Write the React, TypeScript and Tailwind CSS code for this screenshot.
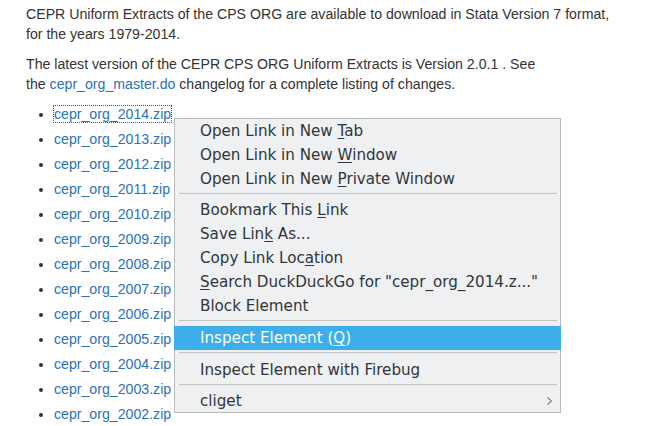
import React from 'react';

const years = ['2014', '2013', '2012', '2011', '2010', '2009', '2008', '2007', '2006', '2005', '2004', '2003', '2002'];

function Item({ children, active = false, arrow = false, h = 'h-6' }: { children: React.ReactNode; active?: boolean; arrow?: boolean; h?: string }) {
  return (
    <div
      className={
        active
          ? 'h-6 -mx-px pl-[26px] pr-2 flex items-center bg-[#3daee9] text-[#fcfcfc]'
          : `${h} pl-[25px] pr-[7px] flex items-center justify-between`
      }
    >
      <span className="whitespace-pre">{children}</span>
      {arrow && (
        <svg width="7" height="10" viewBox="0 0 7 10">
          <polyline points="1.5,1.5 5.5,5 1.5,8.5" fill="none" stroke="#7f8385" strokeWidth="1.1" />
        </svg>
      )}
    </div>
  );
}

function Sep({ tight = false }: { tight?: boolean }) {
  return <div className={tight ? 'h-px bg-[#c3c5c7] ml-1 mr-[3px] mt-[2px] mb-1' : 'h-px bg-[#c3c5c7] ml-1 mr-[3px] mt-[2px] mb-[5px]'} />;
}

const U = ({ children }: { children: React.ReactNode }) => <span className="underline underline-offset-2">{children}</span>;

export default function App() {
  return (
    <div className="relative w-[659px] h-[426px] overflow-hidden bg-white">
      <div className="pt-1 pl-[26px] text-[14.15px] leading-5 text-[#333] font-['Liberation_Sans',Arial,sans-serif]">
        <p className="mb-[10px]">
          CEPR Uniform Extracts of the CPS ORG are available to download in Stata Version 7 format,
          <br />
          for the years 1979-2014.
        </p>
        <p className="mb-[10px]">
          The latest version of the CEPR CPS ORG Uniform Extracts is Version 2.0.1 . See
          <br />
          the <a className="text-[#2a72b5]">cepr_org_master.do</a> changelog for a complete listing of changes.
        </p>
        <ul className="list-disc pl-[28px]">
          {years.map((y, i) => (
            <li key={y} className="leading-[20px] mb-[5px]">
              <a className={i === 0 ? 'text-[#2a72b5] outline outline-1 outline-dotted outline-[#1e5e9c]' : 'text-[#2a72b5]'}>
                cepr_org_{y}.zip
              </a>
            </li>
          ))}
        </ul>
      </div>

      {/* context menu */}
      <div className="absolute left-[174px] top-[118px] w-[387px] bg-[#eff0f1] border border-[#b9bbbd] text-[15.15px] text-[#31363b] font-['DejaVu_Sans',sans-serif]">
        <Item>Open Link in New <U>T</U>ab</Item>
        <Item>Open Link in New <U>W</U>indow</Item>
        <Item>Open Link in New <U>P</U>rivate Window</Item>
        <Sep tight />
        <Item>Bookmark This <U>L</U>ink</Item>
        <Item>Save Lin<U>k</U> As...</Item>
        <Item>Copy Link Loc<U>a</U>tion</Item>
        <Item><U>S</U>earch DuckDuckGo for "cepr_org_2014.z..."</Item>
        <Item>Block Element</Item>
        <Sep />
        <Item active>Inspect Element (<U>Q</U>)</Item>
        <Sep />
        <Item>Inspect Element with Firebug</Item>
        <Sep />
        <Item arrow h="h-[22px]">cliget</Item>
      </div>
    </div>
  );
}
